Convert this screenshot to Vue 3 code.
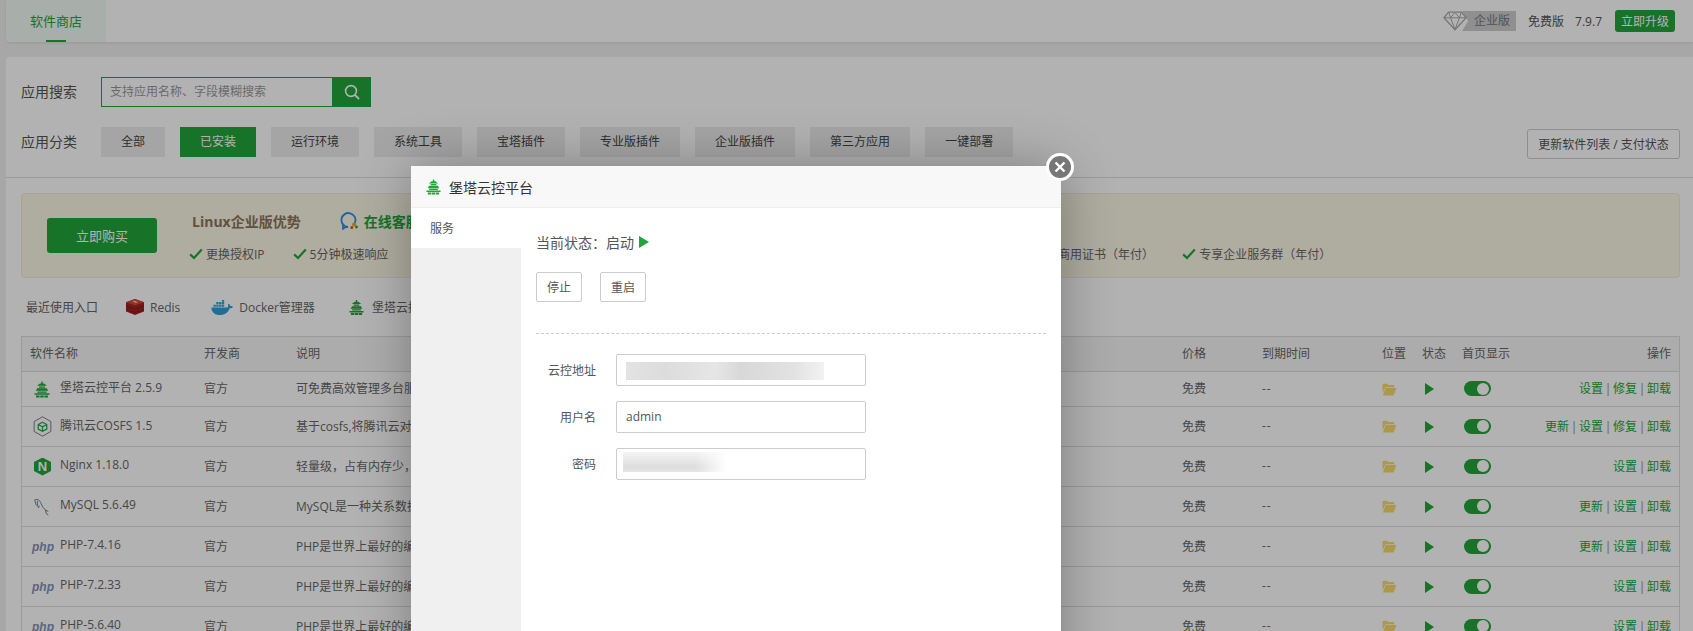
<template>
  <div class="page">
    <svg class="defs" width="0" height="0" aria-hidden="true">
      <symbol id="bt-logo" viewBox="0 0 16 16">
        <path fill="#20a53a" d="M7.300 0h1.400v2H7.300zM3 4.300l3-2.400h4l3 2.400zM5 4.900h6v1.300H5zM1.800 9.300l1.400-2.600h9.600l1.400 2.600zM3.400 9.900h9.200v1.300H3.400zM.5 11.800h15v1.500H.5zM2 13.900h3.600V16H2zM6.200 13.900h3.600V16H6.200zM10.400 13.900H14V16h-3.600z" />
      </symbol>
      <symbol id="check" viewBox="0 0 14 12">
        <path fill="none" stroke="#20a53a" stroke-width="2.200" d="M1.200 6.400 5 10 12.800 1.400" />
      </symbol>
      <symbol id="folder" viewBox="0 0 16 13">
        <path fill="#f6d96c" d="M.6 1.400C.6.800 1 .4 1.600.4h3.600l1.400 1.400h5.600c.6 0 1 .4 1 1v1.400H3.600L.6 10.600z" />
        <path fill="#f6d96c" d="M3.900 5h11.500l-2.800 7.400c-.1.3-.4.5-.7.500H.9z" />
      </symbol>
    </svg>

    <header class="topbar">
      <div class="tab-item">软件商店</div>
      <div class="version">
        <svg class="diamond" viewBox="0 0 24 20" width="24" height="20">
          <path fill="#fff" stroke="#aaa" stroke-width="1.300" d="M5.500 1.200h13l4.600 5.600L12 18.800.9 6.800z" />
          <path fill="none" stroke="#aaa" stroke-width="1" d="M1.200 6.800h21.600M7.500 6.800 12 18.400l4.500-11.600M5.800 1.400l1.700 5.400L12 1.400l4.500 5.400 1.700-5.400" />
        </svg>
        <span class="ent-tag">企业版</span>
        <span class="free">免费版</span>
        <span class="ver-num">7.9.7</span>
        <button class="upgrade">立即升级</button>
      </div>
    </header>

    <main class="card">
      <section class="filters">
        <div class="filter-row">
          <label class="filter-label">应用搜索</label>
          <div class="search">
            <span class="search-input">支持应用名称、字段模糊搜索</span>
            <span class="search-btn">
              <svg viewBox="0 0 16 16" width="16" height="16">
                <circle cx="7" cy="7" r="5.400" fill="none" stroke="#fff" stroke-width="1.600" />
                <path d="M11 11l4 4" stroke="#fff" stroke-width="1.800" />
              </svg>
            </span>
          </div>
        </div>
        <div class="filter-row cats">
          <label class="filter-label">应用分类</label>
          <span
            v-for="c in categories"
            :key="c"
            class="cat"
            :class="{ active: c === '已安装' }"
          >{{ c }}</span>
          <button class="refresh">更新软件列表 / 支付状态</button>
        </div>
      </section>

      <section class="content">
        <div class="banner">
          <button class="buy">立即购买</button>
          <div class="banner-body">
            <div class="banner-title">
              <strong>Linux企业版优势</strong>
              <svg class="chat" viewBox="0 0 20 18" width="20" height="18">
                <path fill="none" stroke="#2f8fe6" stroke-width="1.800" stroke-linecap="round" d="M16 10.500A7 7 0 1 0 9 15H6.500L4 16.800v-3.300" />
                <circle cx="15" cy="12.500" r="1.900" fill="#f0a020" />
                <circle cx="12.800" cy="15.500" r="1.500" fill="#e0503a" />
                <circle cx="17.500" cy="15" r="1.400" fill="#20a53a" />
              </svg>
              <strong class="online">在线客服</strong>
            </div>
            <ul class="perks">
              <li v-for="p in perks" :key="p">
                <svg width="14" height="12"><use href="#check" /></svg>{{ p }}
              </li>
            </ul>
          </div>
        </div>

        <div class="recent">
          <span class="recent-label">最近使用入口</span>
          <span class="recent-item">
            <svg viewBox="0 0 18 16" width="18" height="16">
              <path fill="#a32422" d="M9 0l9 3.200v9.400L9 16 0 12.600V3.200z" />
              <path fill="#d9423a" d="M9 0l9 3.200L9 6.400 0 3.200z" />
              <path fill="#7c1a18" d="M0 6.600l9 3.200 9-3.200v.8L9 10.600 0 7.400zM0 10l9 3.200 9-3.200v.8l-9 3.200-9-3.200z" />
              <path fill="#f3c4c0" d="M6 2.400l3-.8 1 1 2.500.4-3 1-1-.8z" />
            </svg>
            Redis
          </span>
          <span class="recent-item docker">
            <svg viewBox="0 0 22 15" width="22" height="15">
              <path fill="#2d9ed8" d="M.3 7.400h16.400c.6-.9.7-2 .2-3l1-.7c.9.7 1.300 1.500 1.300 2.400 1-.3 2-.1 2.800.6-.7 1.200-1.800 1.600-3.400 1.500C17.300 12.500 13.800 15 9 15 3.500 15 .8 12 .3 7.400z" />
              <path fill="#2d9ed8" d="M2.500 4.700h2.300v2.100H2.500zM5.300 4.700h2.300v2.100H5.300zM8.100 4.700h2.300v2.100H8.100zM10.900 4.700h2.300v2.100h-2.300zM5.300 2.100h2.300v2.100H5.300zM8.100 2.100h2.300v2.100H8.100zM10.900 2.100h2.300v2.100h-2.300zM10.900-.4h2.300v2.100h-2.300z" />
            </svg>
            Docker管理器
          </span>
          <span class="recent-item bt">
            <svg width="15" height="15"><use href="#bt-logo" /></svg>
            堡塔云控平台
          </span>
        </div>

        <div class="table-wrap">
          <table class="soft-table">
            <colgroup>
              <col class="c-name" />
              <col class="c-dev" />
              <col />
              <col class="c-price" />
              <col class="c-exp" />
              <col class="c-small" />
              <col class="c-small" />
              <col class="c-home" />
              <col class="c-ops" />
            </colgroup>
            <thead>
              <tr>
                <th>软件名称</th>
                <th>开发商</th>
                <th>说明</th>
                <th>价格</th>
                <th>到期时间</th>
                <th>位置</th>
                <th>状态</th>
                <th>首页显示</th>
                <th class="right">操作</th>
              </tr>
            </thead>
            <tbody>
              <tr v-for="(s, i) in softs" :key="s.name" :class="{ short: i === 0 }">
                <td>
                  <div class="name-cell">
                    <span class="soft-icon">
                      <svg v-if="s.icon === 'bt'" class="ml1" width="16" height="17"><use href="#bt-logo" /></svg>
                      <svg v-else-if="s.icon === 'cos'" viewBox="0 0 20 22" width="19" height="21">
                        <path fill="none" stroke="#777" stroke-width="1" d="M10 .8l8.800 5v10.400L10 21.200 1.200 16.200V5.800z" />
                        <path fill="none" stroke="#20a53a" stroke-width="1.300" d="M10 6.500l4.500 2.400v4.800L10 16.100l-4.500-2.400V8.900zM5.500 8.900l4.500 2.400 4.500-2.400M10 11.300v4.800" />
                      </svg>
                      <span v-else-if="s.icon === 'nginx'" class="nginx ml1">N</span>
                      <svg v-else-if="s.icon === 'mysql'" viewBox="0 0 20 20" width="18" height="18">
                        <path fill="none" stroke="#55788c" stroke-width="1" d="M2 2C5 1 7 2 8.500 5c1.500 4 3.500 7 5.500 8.500l3 1.500M2 2c.5 3 1 5 2 6.500M5 3c-.5 2 0 5 1 8 .5-1.500 1-2 1.500-2M14 13l.5 4 2.500 2" />
                      </svg>
                      <span v-else class="php">php</span>
                    </span>
                    <span class="soft-name">{{ s.name }}</span>
                  </div>
                </td>
                <td>官方</td>
                <td>{{ s.desc }}</td>
                <td>免费</td>
                <td class="dash">--</td>
                <td><svg class="folder" width="15" height="13"><use href="#folder" /></svg></td>
                <td><span class="play"></span></td>
                <td><span class="switch"></span></td>
                <td class="right ops">
                  <template v-for="(o, k) in s.ops" :key="o">
                    <i v-if="k > 0">|</i><a>{{ o }}</a>
                  </template>
                </td>
              </tr>
            </tbody>
          </table>
        </div>
      </section>
    </main>

    <div class="shade"></div>

    <div class="layer">
      <div class="layer-title">
        <svg width="15" height="16"><use href="#bt-logo" /></svg>
        堡塔云控平台
      </div>
      <span class="layer-close">
        <svg viewBox="0 0 12 12" width="12" height="12">
          <path d="M1.500 1.500l9 9M10.500 1.500l-9 9" stroke="#fff" stroke-width="2.400" />
        </svg>
      </span>
      <div class="layer-body">
        <aside class="layer-side">
          <div class="side-tab">服务</div>
        </aside>
        <div class="layer-main">
          <div class="status">当前状态：启动<span class="status-play"></span></div>
          <div class="actions">
            <button class="plain">停止</button>
            <button class="plain">重启</button>
          </div>
          <div class="form">
            <div class="form-row">
              <label>云控地址</label>
              <div class="field"><span class="blur blur-url"></span></div>
            </div>
            <div class="form-row">
              <label>用户名</label>
              <div class="field">admin</div>
            </div>
            <div class="form-row">
              <label>密码</label>
              <div class="field"><span class="blur blur-pass"></span></div>
            </div>
          </div>
        </div>
      </div>
    </div>
  </div>
</template>

<script setup>
const categories = ['全部', '已安装', '运行环境', '系统工具', '宝塔插件', '专业版插件', '企业版插件', '第三方应用', '一键部署']

const perks = ['更换授权IP', '5分钟极速响应', '15天无理由退款', '30+款付费插件', '20+企业版专享功能', '1000条免费短信（年付）', '2张SSL商用证书（年付）', '专享企业服务群（年付）']

const softs = [
  { name: '堡塔云控平台 2.5.9', icon: 'bt', desc: '可免费高效管理多台服务器的云控平台', ops: ['设置', '修复', '卸载'] },
  { name: '腾讯云COSFS 1.5', icon: 'cos', desc: '基于cosfs,将腾讯云对象存储挂载到本地', ops: ['更新', '设置', '修复', '卸载'] },
  { name: 'Nginx 1.18.0', icon: 'nginx', desc: '轻量级，占有内存少，并发能力强', ops: ['设置', '卸载'] },
  { name: 'MySQL 5.6.49', icon: 'mysql', desc: 'MySQL是一种关系数据库管理系统', ops: ['更新', '设置', '卸载'] },
  { name: 'PHP-7.4.16', icon: 'php', desc: 'PHP是世界上最好的编程语言', ops: ['更新', '设置', '卸载'] },
  { name: 'PHP-7.2.33', icon: 'php', desc: 'PHP是世界上最好的编程语言', ops: ['设置', '卸载'] },
  { name: 'PHP-5.6.40', icon: 'php', desc: 'PHP是世界上最好的编程语言', ops: ['设置', '卸载'] },
]
</script>

<style>
html, body {
  margin: 0;
  overflow: hidden;
}
</style>

<style scoped>
.page {
  position: relative;
  height: 631px;
  overflow: hidden;
  padding-left: 6px;
  box-sizing: border-box;
  background: #f0f0f0;
  font-family: "Open Sans", "Noto Sans CJK SC", sans-serif;
  font-size: 12px;
  color: #666;
}

.defs {
  position: absolute;
}

button {
  font-family: inherit;
  cursor: pointer;
}

.topbar {
  height: 42px;
  background: #fff;
  border-radius: 0 0 0 4px;
  box-shadow: 0 1px 3px rgba(0, 0, 0, 0.1);
  display: flex;
  justify-content: space-between;
  margin-bottom: 15px;
}

.tab-item {
  width: 100px;
  height: 42px;
  box-sizing: border-box;
  background: #f1f9f3;
  color: #20a53a;
  font-size: 13px;
  line-height: 42px;
  text-align: center;
  border-radius: 0 0 0 4px;
  position: relative;
}

.tab-item::after {
  content: "";
  position: absolute;
  left: 40px;
  bottom: 0;
  width: 20px;
  height: 2px;
  background: #20a53a;
}

.version {
  display: flex;
  align-items: center;
  padding-right: 18px;
  color: #555;
}

.diamond {
  position: relative;
  z-index: 1;
  margin-right: -5px;
}

.ent-tag {
  width: 54px;
  height: 20px;
  box-sizing: border-box;
  background: #cdcdcd;
  color: #777;
  line-height: 20px;
  padding-left: 12px;
  clip-path: polygon(0 100%, 6px 50%, 0 0, 100% 0, 100% 100%);
  margin-right: 12px;
}

.ver-num {
  margin-left: 11px;
  margin-right: 13px;
}

.upgrade {
  width: 60px;
  height: 22px;
  padding: 0;
  border: 0;
  border-radius: 3px;
  background: #20a53a;
  color: #fff;
  font-size: 12px;
}

.card {
  background: #fff;
  border-radius: 4px 0 0 0;
  height: 574px;
}

.filters {
  height: 121px;
  box-sizing: border-box;
  padding: 20px 13px 0 15px;
  border-bottom: 1px solid #ddd;
}

.filter-row {
  display: flex;
  align-items: center;
  height: 30px;
}

.cats {
  margin-top: 20px;
  gap: 15px;
}

.filter-label {
  width: 80px;
  margin-top: -2px;
  font-size: 14px;
  color: #555;
}

.cats .filter-label {
  margin-right: -15px;
}

.search {
  display: flex;
  height: 30px;
}

.search-input {
  width: 231px;
  box-sizing: border-box;
  border: 1px solid #20a53a;
  border-right: 0;
  padding-left: 8px;
  line-height: 28px;
  color: #999;
}

.search-btn {
  width: 39px;
  background: #20a53a;
  display: flex;
  align-items: center;
  justify-content: center;
}

.cat {
  height: 30px;
  padding: 0 20px;
  background: #ececec;
  color: #444;
  line-height: 30px;
}

.cat.active {
  background: #20a53a;
  color: #fff;
}

.refresh {
  margin-left: auto;
  margin-top: 4px;
  width: 153px;
  height: 30px;
  padding: 0;
  border: 1px solid #ccc;
  border-radius: 3px;
  background: #fff;
  color: #555;
  font-size: 12px;
}

.content {
  padding: 15px 13px 0 15px;
}

.banner {
  height: 85px;
  box-sizing: border-box;
  display: flex;
  align-items: center;
  padding-left: 25px;
  background: #fbf6e5;
  border: 1px solid #f0ebd8;
  border-radius: 4px;
}

.buy {
  width: 110px;
  height: 35px;
  padding: 0;
  border: 0;
  border-radius: 3px;
  background: #20a53a;
  color: #fff;
  font-size: 13px;
}

.banner-body {
  margin-left: 32px;
  padding-top: 2px;
  flex: 1;
}

.banner-title {
  display: flex;
  align-items: center;
  height: 20px;
  padding-left: 3px;
  font-size: 14px;
}

.banner-title strong {
  color: #8d7658;
}

.banner-title .online {
  color: #20a53a;
}

.chat {
  margin: 0 5px 0 38px;
}

.perks {
  list-style: none;
  margin: 14px 0 0;
  padding: 0;
  display: flex;
  gap: 28px;
  white-space: nowrap;
}

.perks li {
  display: flex;
  align-items: center;
  gap: 3px;
}

.recent {
  height: 58px;
  display: flex;
  align-items: center;
  padding-left: 5px;
}

.recent-label {
  margin-right: 28px;
}

.recent-item {
  display: flex;
  align-items: center;
  gap: 6px;
  margin-right: 31px;
}

.recent-item.docker {
  margin-right: 34px;
}

.recent-item.bt {
  gap: 8px;
}

.table-wrap {
  border: 1px solid #ddd;
  border-bottom: 0;
}

.soft-table {
  width: 100%;
  table-layout: fixed;
  border-collapse: separate;
  border-spacing: 0;
}

.c-name { width: 174px; }
.c-dev { width: 92px; }
.c-price { width: 80px; }
.c-exp { width: 120px; }
.c-small { width: 40px; }
.c-home { width: 80px; }
.c-ops { width: 145px; }

th, td {
  box-sizing: border-box;
  padding: 0 8px 2px;
  height: 40px;
  text-align: left;
  font-weight: normal;
  white-space: nowrap;
  overflow: hidden;
  border-bottom: 1px solid #ddd;
}

th {
  height: 35px;
  background: #f6f6f6;
}

tr.short td {
  height: 35px;
}

th.right, td.right {
  text-align: right;
}

.dash {
  letter-spacing: 1px;
}

.name-cell {
  display: flex;
  align-items: center;
}

.soft-icon {
  width: 29px;
  box-sizing: border-box;
  margin-left: 1px;
  margin-top: 2px;
  padding-left: 2px;
  display: flex;
  align-items: center;
}

.soft-name {
  margin-top: -2px;
}

.ml1 {
  margin-left: 1px;
}

.nginx {
  width: 17px;
  height: 18px;
  background: #20a53a;
  clip-path: polygon(50% 0, 100% 25%, 100% 75%, 50% 100%, 0 75%, 0 25%);
  color: #fff;
  font-family: "Liberation Sans", sans-serif;
  font-size: 13px;
  font-weight: bold;
  line-height: 18px;
  text-align: center;
}

.php {
  margin-left: -1px;
  font-family: "Liberation Sans", sans-serif;
  font-size: 12px;
  font-weight: bold;
  font-style: italic;
  color: #8391b5;
}

.folder {
  display: block;
  margin-top: 2px;
}

.play {
  display: block;
  width: 0;
  height: 0;
  margin-top: 2px;
  margin-left: 3px;
  border-left: 9px solid #20a53a;
  border-top: 6px solid transparent;
  border-bottom: 6px solid transparent;
}

.switch {
  display: block;
  position: relative;
  width: 27px;
  height: 15px;
  margin-top: 1px;
  margin-left: 2px;
  border-radius: 8px;
  background: #20a53a;
}

.switch::after {
  content: "";
  position: absolute;
  top: 1.5px;
  right: 2px;
  width: 12px;
  height: 12px;
  border-radius: 50%;
  background: #fff;
}

.ops a {
  color: #20a53a;
}

.ops i {
  display: inline-block;
  width: 10px;
  font-style: normal;
  text-align: center;
  color: #888;
}

.shade {
  position: absolute;
  inset: 0;
  z-index: 2;
  background: rgba(0, 0, 0, 0.3);
}

.layer {
  position: absolute;
  left: 411px;
  top: 166px;
  z-index: 3;
  width: 650px;
  height: 600px;
  background: #fff;
  box-shadow: 1px 1px 50px rgba(0, 0, 0, 0.3);
}

.layer-title {
  height: 42px;
  box-sizing: border-box;
  display: flex;
  align-items: center;
  gap: 8px;
  padding-left: 15px;
  background: #f8f8f8;
  border-bottom: 1px solid #eee;
  font-size: 14px;
  color: #333;
}

.layer-close {
  position: absolute;
  top: -13px;
  right: -13px;
  width: 22px;
  height: 22px;
  border: 3px solid #fff;
  border-radius: 50%;
  background: #777;
  display: flex;
  align-items: center;
  justify-content: center;
}

.layer-body {
  display: flex;
  height: 558px;
}

.layer-side {
  width: 110px;
  background: #f0f0f0;
}

.side-tab {
  height: 40px;
  padding-left: 19px;
  background: #fff;
  line-height: 42px;
  color: #555;
}

.layer-main {
  flex: 1;
  padding: 25px 15px 0;
  color: #555;
}

.status {
  display: flex;
  align-items: center;
  height: 18px;
  font-size: 14px;
}

.status-play {
  width: 0;
  height: 0;
  margin-left: 5px;
  border-left: 10px solid #20a53a;
  border-top: 6px solid transparent;
  border-bottom: 6px solid transparent;
}

.actions {
  display: flex;
  gap: 18px;
  margin-top: 21px;
  padding-bottom: 31px;
  border-bottom: 1px dashed #ccc;
}

.plain {
  width: 46px;
  height: 30px;
  padding: 0;
  border: 1px solid #ccc;
  border-radius: 2px;
  background: #fff;
  color: #555;
  font-size: 12px;
}

.form {
  margin-top: 20px;
  display: flex;
  flex-direction: column;
  gap: 15px;
}

.form-row {
  display: flex;
  align-items: center;
  gap: 20px;
}

.form-row label {
  width: 60px;
  text-align: right;
}

.field {
  position: relative;
  width: 250px;
  height: 32px;
  box-sizing: border-box;
  border: 1px solid #ccc;
  border-radius: 2px;
  padding-left: 9px;
  line-height: 30px;
}

.blur {
  position: absolute;
}

.blur-url {
  left: 9px;
  top: 7px;
  width: 198px;
  height: 18px;
  background: linear-gradient(90deg, #e3e3e3 0, #dcdcdc 20%, #e6e6e6 45%, #d8d8d8 58%, #e2e2e2 85%, #f2f2f2 100%);
}

.blur-pass {
  left: 6px;
  top: 3px;
  width: 104px;
  height: 20px;
  background: linear-gradient(180deg, #f4f4f4 0, #dedede 75%, #e4e4e4 100%);
  mask-image: linear-gradient(90deg, #000 70%, transparent 100%);
}
</style>
